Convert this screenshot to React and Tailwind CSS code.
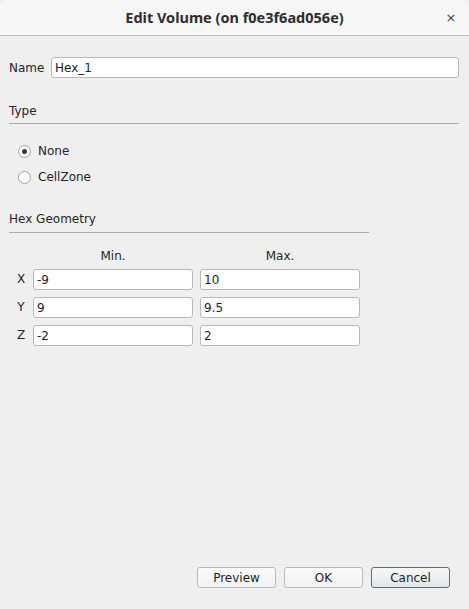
import React, { useState } from "react";

const font = "font-['DejaVu_Sans',sans-serif]";

const Field = ({ value, className = "" }) => (
  <input
    type="text"
    defaultValue={value}
    className={`h-[21px] bg-white border border-[#b9b9b9] rounded-[3px] px-[3px] text-[12px] text-[#1e1e1e] outline-none ${font} ${className}`}
  />
);

const Radio = ({ label, checked, onClick }) => (
  <div className="flex items-center h-[16px] pl-[9px] gap-[7px] cursor-default" onClick={onClick}>
    <span className="w-[13px] h-[13px] rounded-full border border-[#a3a3a3] bg-white flex items-center justify-center">
      {checked && <span className="w-[5px] h-[5px] rounded-full bg-[#3a3a3a]" />}
    </span>
    <span>{label}</span>
  </div>
);

const Btn = ({ children, primary }) => (
  <button
    className={`w-[79px] h-[21px] rounded-[3px] border text-[12px] text-[#1e1e1e] leading-none ${font} ${
      primary
        ? "border-[#3b74a6] bg-gradient-to-b from-[#f6f7f8] to-[#e4e7ea]"
        : "border-[#b9b9b9] bg-gradient-to-b from-[#fbfbfb] to-[#f1f1f1]"
    }`}
  >
    {children}
  </button>
);

export default function App() {
  const [type, setType] = useState("none");
  const rows = [
    ["X", "-9", "10"],
    ["Y", "9", "9.5"],
    ["Z", "-2", "2"],
  ];

  return (
    <div className={`w-[469px] h-[609px] flex flex-col bg-[#efefef] text-[12px] text-[#262626] ${font}`}>
      {/* title bar */}
      <div className="h-[36px] shrink-0 grid grid-cols-[40px_1fr_40px] items-center bg-[#f6f6f6] border-b border-[#bdbdbd] rounded-t-[8px]">
        <span />
        <span className="text-center font-bold text-[14.5px] text-[#2e2e2e] font-['Noto_Sans',sans-serif] pt-[1px]">
          Edit Volume (on f0e3f6ad056e)
        </span>
        <span className="text-center text-[13px] text-[#444] leading-none pl-[4px]">×</span>
      </div>

      <div className="flex flex-col flex-1 px-[9px]">
        <div className="mt-[21px] flex items-center h-[21px]">
          <span className="w-[42px]">Name</span>
          <Field value="Hex_1" className="flex-1 mr-[1px]" />
        </div>

        <div className="mt-[25px] h-[16px] leading-[16px]">Type</div>
        <div className="mt-[4px] h-px bg-[#a9a9a9] w-[450px]" />

        <div className="mt-[19px]">
          <Radio label="None" checked={type === "none"} onClick={() => setType("none")} />
        </div>
        <div className="mt-[10px]">
          <Radio label="CellZone" checked={type === "cell"} onClick={() => setType("cell")} />
        </div>

        <div className="mt-[26px] h-[16px] leading-[16px]">Hex Geometry</div>
        <div className="mt-[5px] h-px bg-[#a9a9a9] w-[360px]" />

        <div className="mt-[15px] grid grid-cols-[24px_160px_7px_160px] w-[360px]">
          <span className="h-[16px]" />
          <span className="text-center h-[16px] leading-[16px]">Min.</span>
          <span />
          <span className="text-center h-[16px] leading-[16px]">Max.</span>
        </div>
        <div className="mt-[5px] grid grid-cols-[24px_160px_7px_160px] gap-y-[7px] w-[360px]">
          {rows.map(([axis, min, max]) => (
            <React.Fragment key={axis}>
              <span className="h-[21px] leading-[21px] text-center">{axis}</span>
              <Field value={min} className="w-[160px]" />
              <span />
              <Field value={max} className="w-[160px]" />
            </React.Fragment>
          ))}
        </div>

        <div className="mt-auto mb-[21px] flex justify-end gap-[8px] pr-[10px]">
          <Btn>Preview</Btn>
          <Btn>OK</Btn>
          <Btn primary>Cancel</Btn>
        </div>
      </div>
    </div>
  );
}
